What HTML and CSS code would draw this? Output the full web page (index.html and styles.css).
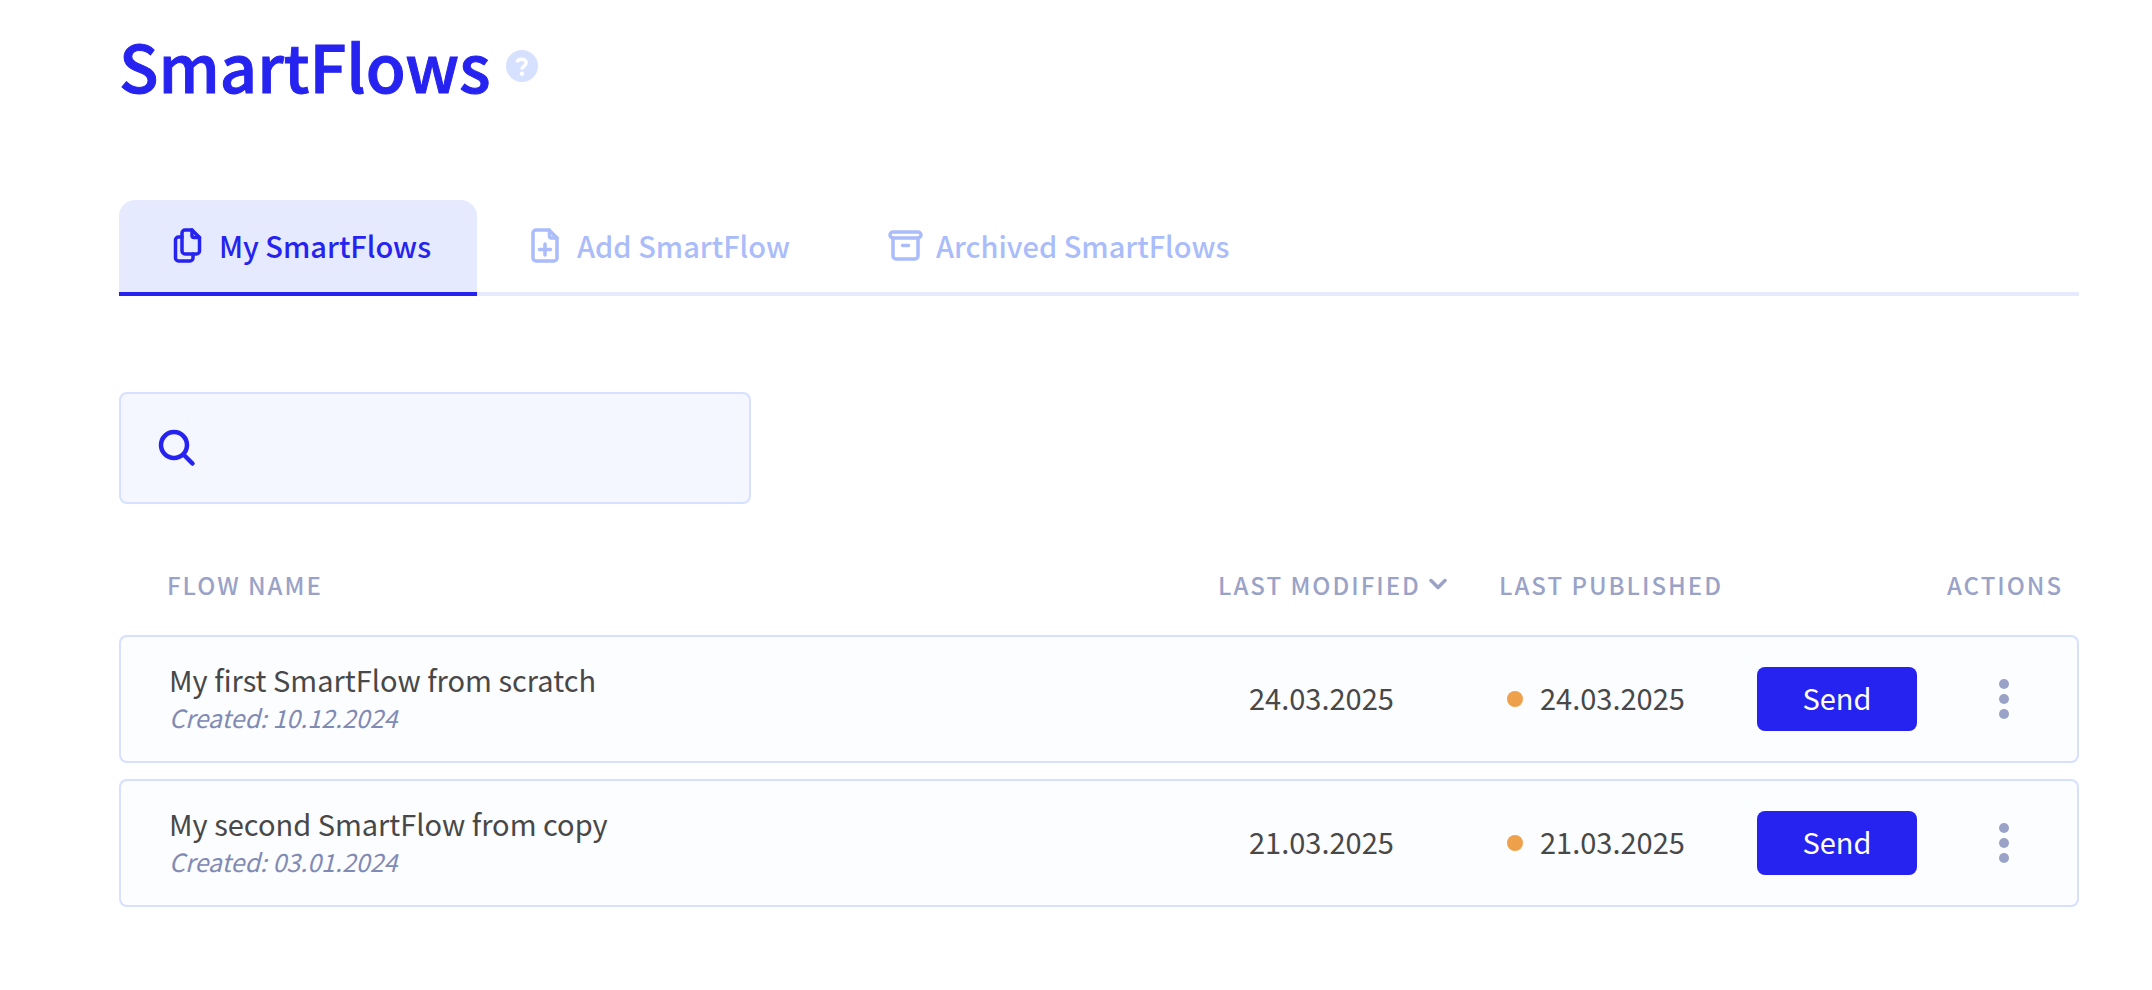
FILE: index.html
```html
<!DOCTYPE html>
<html lang="en">
	<head>
		<meta charset="UTF-8" />
		<meta name="viewport" content="width=device-width, initial-scale=1.0" />
		<title>SmartFlows</title>
		<link rel="stylesheet" href="styles.css">
	</head>
	<body>
		<main class="page">
			<header class="page-header">
				<h1 class="title">SmartFlows</h1>
				<button class="help" type="button" aria-label="Help">
					<svg viewBox="0 0 32 32" width="32" height="32" fill="none">
						<circle cx="16" cy="16" r="16" fill="#d6e0ff" />
						<path d="M11 12.200C11.500 10.300 13.300 9.300 15.800 9.300c2.600 0 4.400 1.400 4.400 3.500 0 3-4.200 3.100-4.200 6.600" stroke="#fff" stroke-width="3.400" />
						<circle cx="16" cy="23.800" r="2.200" fill="#fff" />
					</svg>
				</button>
			</header>

			<nav class="tabs">
				<a class="tab active" href="#my">
					<svg class="icon" viewBox="0 0 36 36">
						<path d="M14 3h7l7.500 7.500V24a3 3 0 0 1-3 3H14a3 3 0 0 1-3-3V6a3 3 0 0 1 3-3z" />
						<path d="M21 3v5.500a2 2 0 0 0 2 2h5.500M11 10H7.500a3 3 0 0 0-3 3v18a3 3 0 0 0 3 3H19a3 3 0 0 0 3-3v-4" />
					</svg>
					My SmartFlows
				</a>
				<a class="tab" href="#add">
					<svg class="icon" viewBox="0 0 36 36">
						<path d="M7 3h13l8 8v20a3 3 0 0 1-3 3H7a3 3 0 0 1-3-3V6a3 3 0 0 1 3-3z" />
						<path d="M20.500 3v6a2 2 0 0 0 2 2H28M16 17v11M10.500 22.500h11" />
					</svg>
					Add SmartFlow
				</a>
				<a class="tab" href="#archived">
					<svg class="icon" viewBox="0 0 36 36">
						<rect x="2" y="5" width="31" height="6" rx="3" />
						<path d="M5 11v18a3 3 0 0 0 3 3h19a3 3 0 0 0 3-3V11M14.500 18.500h6" />
					</svg>
					Archived SmartFlows
				</a>
			</nav>

			<label class="search">
				<svg viewBox="0 0 40 40" width="40" height="40">
					<circle cx="17" cy="17" r="13" />
					<path d="M26.500 26.500l9 9" />
				</svg>
				<input class="search-input" type="text" aria-label="Search flows" />
			</label>

			<table class="flows">
				<colgroup>
					<col />
					<col class="col-modified" />
					<col class="col-published" />
					<col class="col-send" />
					<col class="col-actions" />
				</colgroup>
				<thead>
					<tr>
						<th class="name">Flow name</th>
						<th>
							<button class="sort" type="button">
								Last modified
								<svg viewBox="0 0 18 12" width="18" height="12"><path d="M2 2.500l7 7 7-7" /></svg>
							</button>
						</th>
						<th>Last published</th>
						<td></td>
						<th class="actions">Actions</th>
					</tr>
				</thead>
				<tbody>
					<tr>
						<td class="name">
							<div class="flow-name">My first SmartFlow from scratch</div>
							<div class="created">Created: 10.12.2024</div>
						</td>
						<td class="modified">24.03.2025</td>
						<td class="published"><span class="dot"></span>24.03.2025</td>
						<td><button class="send" type="button">Send</button></td>
						<td class="actions">
							<button class="more" type="button" aria-label="More actions">
								<svg viewBox="0 0 10 40" width="10" height="40">
									<circle cx="5" cy="5" r="5" />
									<circle cx="5" cy="20" r="5" />
									<circle cx="5" cy="35" r="5" />
								</svg>
							</button>
						</td>
					</tr>
					<tr>
						<td class="name">
							<div class="flow-name">My second SmartFlow from copy</div>
							<div class="created">Created: 03.01.2024</div>
						</td>
						<td class="modified">21.03.2025</td>
						<td class="published"><span class="dot"></span>21.03.2025</td>
						<td><button class="send" type="button">Send</button></td>
						<td class="actions">
							<button class="more" type="button" aria-label="More actions">
								<svg viewBox="0 0 10 40" width="10" height="40">
									<circle cx="5" cy="5" r="5" />
									<circle cx="5" cy="20" r="5" />
									<circle cx="5" cy="35" r="5" />
								</svg>
							</button>
						</td>
					</tr>
				</tbody>
			</table>
		</main>
	</body>
</html>
```
FILE: styles.css
```css
* {
	box-sizing: border-box;
}
body {
	margin: 0;
	color: #484848;
	font-family: "Noto Sans CJK SC", "Noto Sans", sans-serif;
	font-size: 29px;
	background-color: #fff;
}
button {
	padding: 0;
	border: none;
	color: inherit;
	font: inherit;
	background: none;
	cursor: pointer;
}
svg {
	display: block;
	flex: none;
}
.page {
	padding: 20px 73px 40px 119px;
}

.page-header {
	display: flex;
	align-items: center;
	gap: 16px;
	height: 92px;
}
.title {
	margin: 0;
	padding-bottom: 2px;
	color: #2623f0;
	font-weight: 500;
	font-size: 65px;
	line-height: 92px;
	-webkit-text-stroke: 1px #2623f0;
}

.tabs {
	display: flex;
	margin-top: 88px;
	box-shadow: inset 0 -4px #e5eaff;
}
.tab {
	display: flex;
	align-items: center;
	gap: 12px;
	height: 96px;
	padding: 0 46px 6px 52px;
	border-radius: 16px 16px 0 0;
	color: #aabcfa;
	font-weight: 500;
	text-decoration: none;
}
.tab.active {
	color: #2623f0;
	background-color: #e5eaff;
	box-shadow: inset 0 -4px #2623f0;
}
.icon {
	width: 36px;
	height: 36px;
	fill: none;
	stroke: currentColor;
	stroke-width: 3.5;
	stroke-linecap: round;
	stroke-linejoin: round;
}

.search {
	display: flex;
	align-items: center;
	gap: 16px;
	width: 632px;
	max-width: 100%;
	height: 112px;
	margin-top: 96px;
	padding: 0 36px;
	border: 2px solid #d6e0ff;
	border-radius: 8px;
	background-color: #f4f7ff;
}
.search svg {
	fill: none;
	stroke: #2623f0;
	stroke-width: 4.5;
	stroke-linecap: round;
}
.search-input {
	flex: 1;
	min-width: 0;
	border: none;
	outline: none;
	color: inherit;
	font: inherit;
	background: none;
}

.flows {
	width: 100%;
	margin-top: 39px;
	border-spacing: 0 16px;
	table-layout: fixed;
}
.flows th,
.flows td {
	padding: 0;
	text-align: left;
	white-space: nowrap;
}
.col-modified {
	width: 281px;
}
.col-published {
	width: 258px;
}
.col-send {
	width: 174px;
}
.col-actions {
	width: 148px;
}
.flows th {
	height: 60px;
	padding-bottom: 10px;
	color: #9aa3c7;
	font-weight: 500;
	font-size: 24px;
	letter-spacing: 2px;
	text-transform: uppercase;
}
.flows .name {
	padding-left: 48px;
}
.flows .actions {
	text-align: center;
}
.sort {
	display: flex;
	align-items: center;
	gap: 8px;
	letter-spacing: inherit;
	text-transform: inherit;
}
.sort svg {
	fill: none;
	stroke: currentColor;
	stroke-width: 3.5;
	stroke-linecap: round;
	stroke-linejoin: round;
}

.flows tbody td {
	height: 128px;
	border: solid #d6e0ff;
	border-width: 2px 0;
	background-color: #fcfdff;
}
.flows tbody td:first-child {
	border-left-width: 2px;
	border-radius: 8px 0 0 8px;
}
.flows tbody td:last-child {
	border-right-width: 2px;
	border-radius: 0 8px 8px 0;
}
.flows tbody .name,
.flows tbody .modified,
.flows tbody .published {
	padding-bottom: 4px;
}
.flow-name {
	line-height: 40px;
}
.created {
	color: #808bb5;
	font-style: italic;
	font-size: 25px;
	line-height: 36px;
}
.flows .modified {
	padding-left: 31px;
}
.flows .published {
	padding-left: 8px;
}
.dot {
	display: inline-block;
	width: 16px;
	height: 16px;
	margin-right: 17px;
	border-radius: 50%;
	vertical-align: 3px;
	background-color: #eea04a;
}
.send {
	display: block;
	width: 160px;
	height: 64px;
	padding-bottom: 4px;
	border-radius: 8px;
	color: #fff;
	line-height: 60px;
	background-color: #2623f0;
}
.more {
	display: block;
	margin: 0 auto;
}
.more svg {
	fill: #9aa3c7;
}
```
